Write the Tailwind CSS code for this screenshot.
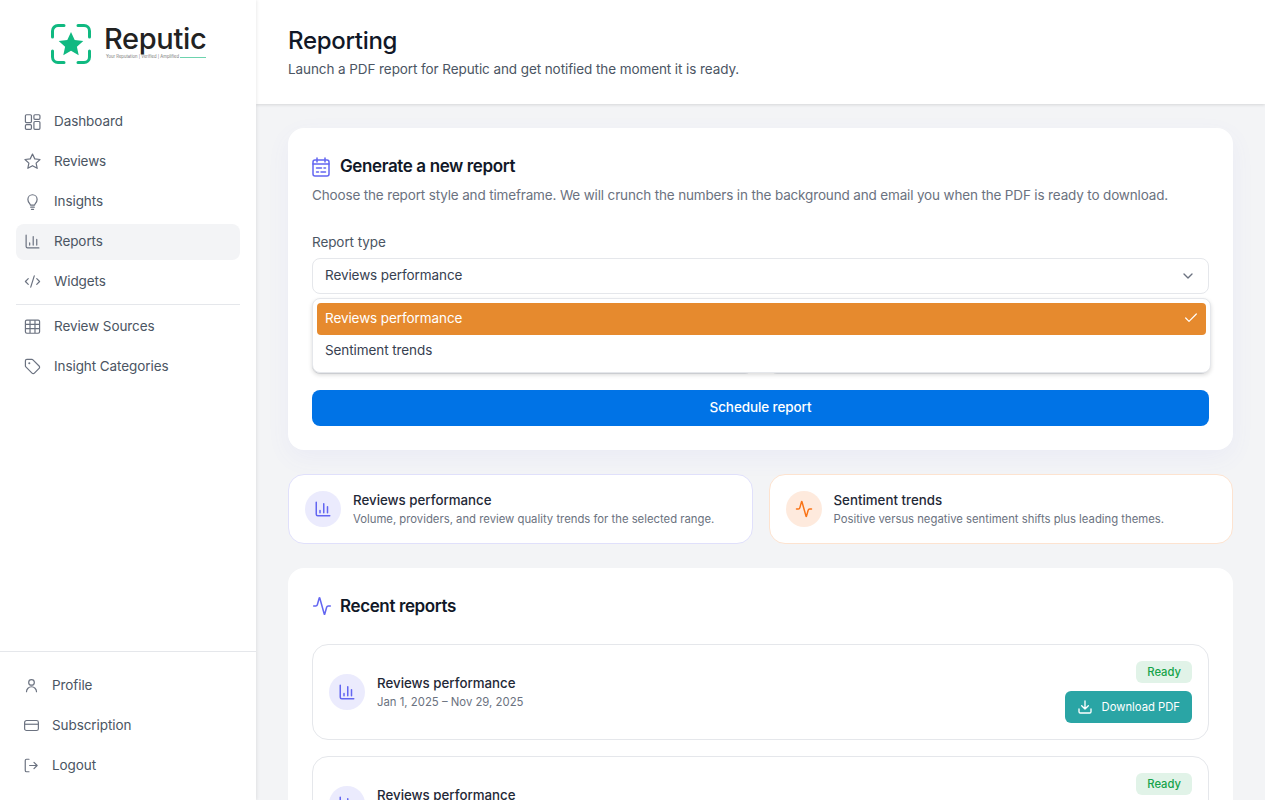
<!DOCTYPE html>
<html lang="en"><head><meta charset="utf-8"><title>Reporting</title>
<script src="https://cdn.jsdelivr.net/npm/@tailwindcss/browser@4"></script></head>
<body class="bg-white font-['Inter',sans-serif]">
<div class="flex h-screen overflow-hidden bg-white">
  <aside class="w-64 shrink-0 h-full flex flex-col bg-white relative z-10 shadow-[1px_0_3px_rgba(0,0,0,0.08)]">
    <div class="h-[104px] shrink-0 flex items-start pl-[51px] pt-[24px] gap-[13px]">
      <svg width="40" height="40" viewBox="0 0 40 40" fill="none" class="shrink-0"><path d="M1.5 13V7a5.5 5.5 0 0 1 5.5-5.5h6M27 1.500h6a5.500 5.500 0 0 1 5.500 5.500v6M38.500 27v6a5.500 5.500 0 0 1-5.500 5.500h-6M13 38.500H7A5.500 5.500 0 0 1 1.500 33v-6" stroke="#10b981" stroke-width="3" stroke-linecap="round"/><path d="M20 8l3.700 8 8.600.900-6.400 5.800 1.800 8.500L20 26.800l-7.700 4.400 1.800-8.500-6.400-5.800 8.600-.900z" fill="#10b981"/></svg>
      <div class="w-[102px]">
        <div class="text-[29px] leading-[30px] font-medium text-[#222] tracking-[-0.35px]">Reputic</div>
        <div class="flex items-center gap-[1px] pl-[2px]"><span class="text-[4.2px] leading-[6px] text-[#777] whitespace-nowrap">Your Reputation | Verified | Amplified</span><span class="h-px flex-1 bg-[#6dd3ae]"></span></div>
      </div>
    </div>
    <nav class="px-4 flex flex-col text-[13.5px] tracking-[-0.085px] text-[#4b5563]">
      <a class="h-9 mb-1 pb-[2px] flex items-center gap-[13px] px-2"><svg class="w-[17px] h-[17px] text-[#6b7280]" viewBox="0 0 24 24" fill="none" stroke="currentColor" stroke-width="1.700" stroke-linejoin="round"><rect x="2" y="2.500" width="8.500" height="11" rx="1.500"/><rect x="14" y="2.500" width="8.500" height="6.500" rx="1.500"/><rect x="14" y="12" width="8.500" height="11" rx="1.500"/><rect x="2" y="16.500" width="8.500" height="6.500" rx="1.500"/></svg>Dashboard</a>
      <a class="h-9 mb-1 pb-[2px] flex items-center gap-[13px] px-2"><svg class="w-[17px] h-[17px] text-[#6b7280]" viewBox="0 0 24 24" fill="none" stroke="currentColor" stroke-width="1.700" stroke-linejoin="round"><path d="M12 1.500l3.200 6.800 7.400.9-5.500 5.100 1.500 7.300-6.600-3.700-6.600 3.700 1.500-7.300L1.400 9.200l7.400-.9z"/></svg>Reviews</a>
      <a class="h-9 mb-1 pb-[2px] flex items-center gap-[13px] px-2"><svg class="w-[17px] h-[17px] text-[#6b7280]" viewBox="0 0 24 24" fill="none" stroke="currentColor" stroke-width="1.700" stroke-linecap="round" stroke-linejoin="round"><path d="M9 17c0-2-3.500-3.500-3.500-8a6.500 6.500 0 0 1 13 0c0 4.500-3.500 6-3.500 8z"/><path d="M9.500 20h5M10.500 23h3"/></svg>Insights</a>
      <a class="h-9 mb-1 pb-[2px] flex items-center gap-[13px] px-2 rounded-lg bg-[#f3f4f6]"><svg class="w-[17px] h-[17px] text-[#6b7280]" viewBox="0 0 24 24" fill="none" stroke="currentColor" stroke-width="1.700" stroke-linecap="round" stroke-linejoin="round"><path d="M3 3v16a2 2 0 0 0 2 2h16"/><path d="M18 17V9M13 17V5M8 17v-3"/></svg>Reports</a>
      <a class="h-9 pb-[2px] flex items-center gap-[13px] px-2"><svg class="w-[17px] h-[17px] text-[#6b7280]" viewBox="0 0 24 24" fill="none" stroke="currentColor" stroke-width="1.700" stroke-linecap="round" stroke-linejoin="round"><path d="m18 16 4-4-4-4M6 8l-4 4 4 4M14.500 4l-5 16"/></svg>Widgets</a>
      <div class="h-px bg-[#e5e7eb] mt-[4px] mb-[3px]"></div>
      <a class="h-9 mb-1 pb-[2px] flex items-center gap-[13px] px-2 mt-[1px]"><svg class="w-[17px] h-[17px] text-[#6b7280]" viewBox="0 0 24 24" fill="none" stroke="currentColor" stroke-width="1.700" stroke-linejoin="round"><rect x="2" y="3" width="20" height="18.500" rx="2"/><path d="M2 9h20M2 15h20M8.500 3v18M15.500 3v18"/></svg>Review Sources</a>
      <a class="h-9 pb-[2px] flex items-center gap-[13px] px-2"><svg class="w-[17px] h-[17px] text-[#6b7280]" viewBox="0 0 24 24" fill="none" stroke="currentColor" stroke-width="1.700" stroke-linecap="round" stroke-linejoin="round"><path d="M12.600 2.600a2 2 0 0 0-1.400-.6H4a2 2 0 0 0-2 2v7.200a2 2 0 0 0 .6 1.400l8.700 8.700a2.400 2.400 0 0 0 3.400 0l6.600-6.600a2.400 2.400 0 0 0 0-3.400z"/><circle cx="7.500" cy="7.500" r=".6" fill="currentColor"/></svg>Insight Categories</a>
    </nav>
    <div class="mt-auto border-t border-[#e5e7eb] px-4 pt-[15px] h-[149px] text-[13.5px] tracking-[-0.085px] text-[#4b5563] flex flex-col gap-1">
      <a class="h-9 flex items-center gap-[13px] px-2"><svg class="w-[15px] h-[15px] text-[#6b7280]" viewBox="0 0 24 24" fill="none" stroke="currentColor" stroke-width="1.900" stroke-linecap="round"><circle cx="12" cy="7" r="4.500"/><path d="M20 22a8 8 0 0 0-16 0"/></svg>Profile</a>
      <a class="h-9 flex items-center gap-[13px] px-2"><svg class="w-[15px] h-[15px] text-[#6b7280]" viewBox="0 0 24 24" fill="none" stroke="currentColor" stroke-width="1.900"><rect x="1" y="4" width="22" height="16" rx="3"/><path d="M1 10h22"/></svg>Subscription</a>
      <a class="h-9 flex items-center gap-[13px] px-2"><svg class="w-[15px] h-[15px] text-[#6b7280]" viewBox="0 0 24 24" fill="none" stroke="currentColor" stroke-width="1.900" stroke-linecap="round" stroke-linejoin="round"><path d="M8 22H4a2 2 0 0 1-2-2V4a2 2 0 0 1 2-2h4"/><path d="m16 17 5-5-5-5M21 12H9"/></svg>Logout</a>
    </div>
  </aside>
  <main class="flex-1 min-w-0 h-full overflow-hidden bg-[#f3f4f6]">
    <header class="h-[104px] bg-white px-8 pt-[25px] shadow-[0_1px_3px_rgba(0,0,0,0.12)]">
      <h1 class="text-[24px] leading-[32px] font-medium text-[#111827] tracking-[-0.3px]">Reporting</h1>
      <p class="text-[13.5px] tracking-[-0.085px] leading-[24px] text-[#4b5563]">Launch a PDF report for Reputic and get notified the moment it is ready.</p>
    </header>
    <div class="p-8 pt-6 flex flex-col gap-6">
      <section class="bg-white rounded-2xl p-6 h-[322px] shadow-[0_8px_24px_rgba(99,102,241,0.06)]">
        <div class="flex items-center gap-[10px] h-[28px]">
          <svg class="w-[18px] h-[20px] mt-[1px] text-[#6366f1]" viewBox="0 0 18 20" fill="none" stroke="currentColor" stroke-width="1.500" stroke-linecap="round"><rect x="1" y="3" width="16" height="16" rx="2"/><path d="M5 1v4M13 1v4M1 7h16"/><path d="M4.500 11h5M12 11h1.500M4.500 15h2M9 15h4.500"/></svg>
          <h2 class="text-[17px] tracking-[-0.38px] leading-[28px] font-semibold text-[#111827]">Generate a new report</h2>
        </div>
        <p class="mt-[3px] text-[13.5px] tracking-[-0.155px] leading-[24px] text-[#6b7280] whitespace-nowrap">Choose the report style and timeframe. We will crunch the numbers in the background and email you when the PDF is ready to download.</p>
        <div class="relative mt-[25px] flex flex-col gap-4">
          <div>
            <div class="text-[13.5px] tracking-[-0.085px] leading-[20px] text-[#4b5563] mb-[6px]">Report type</div>
            <div class="h-9 pb-[1px] rounded-lg border border-[#e5e7eb] bg-white flex items-center justify-between px-3 text-[13.5px] tracking-[-0.085px] text-[#374151]">Reviews performance<svg class="w-4 h-4 text-[#6b7280]" viewBox="0 0 24 24" fill="none" stroke="currentColor" stroke-width="2" stroke-linecap="round" stroke-linejoin="round"><path d="m6 9 6 6 6-6"/></svg></div>
          </div>
          <div class="grid grid-cols-2 gap-4 pt-7">
            <div class="h-9 rounded-lg border border-[#e5e7eb] bg-white"></div>
            <div class="h-9 rounded-lg border border-[#e5e7eb] bg-white"></div>
          </div>
          <button class="h-9 pb-[1px] rounded-lg bg-[#0073e6] text-white text-[13.5px] tracking-[-0.1px] font-medium">Schedule report</button>
          <div class="absolute left-0 -right-[2px] top-[66px] h-[75px] rounded-lg border border-[#e5e7eb] bg-white shadow-[0_2px_4px_rgba(0,0,0,0.15)] p-1 text-[13.5px] tracking-[-0.085px] text-[#374151]">
            <div class="h-8 pb-[2px] rounded bg-[#e68a2e] text-white flex items-center justify-between px-2">Reviews performance<svg class="w-4 h-4 mr-[-1px]" viewBox="0 0 24 24" fill="none" stroke="currentColor" stroke-width="1.800" stroke-linecap="round" stroke-linejoin="round"><path d="M20 6 9 17l-5-5"/></svg></div>
            <div class="h-8 pb-[2px] flex items-center px-2">Sentiment trends</div>
          </div>
        </div>
      </section>
      <div class="grid grid-cols-2 gap-4">
        <div class="h-[70px] rounded-2xl bg-white border border-[#e0e0fb] flex items-center gap-3 px-4">
          <div class="w-9 h-9 shrink-0 rounded-full bg-[#ebebfd] flex items-center justify-center"><svg class="w-[18px] h-[18px] text-[#6366f1]" viewBox="0 0 24 24" fill="none" stroke="currentColor" stroke-width="2" stroke-linecap="round" stroke-linejoin="round"><path d="M3 3v16a2 2 0 0 0 2 2h16"/><path d="M18 17V9M13 17V5M8 17v-3"/></svg></div>
          <div class="-mt-[1px]"><div class="text-[13.3px] leading-[18px] mb-[2px] font-medium text-[#1f2937]">Reviews performance</div><div class="text-[11.3px] leading-[16px] text-[#6b7280]">Volume, providers, and review quality trends for the selected range.</div></div>
        </div>
        <div class="h-[70px] rounded-2xl bg-white border border-[#fde3d0] flex items-center gap-3 px-4">
          <div class="w-9 h-9 shrink-0 rounded-full bg-[#feeadd] flex items-center justify-center"><svg class="w-[18px] h-[18px] text-[#f97316]" viewBox="0 0 24 24" fill="none" stroke="currentColor" stroke-width="2" stroke-linecap="round" stroke-linejoin="round"><path d="M22 12h-2.480a2 2 0 0 0-1.930 1.460l-2.350 8.360a.25.25 0 0 1-.48 0L9.240 2.180a.25.25 0 0 0-.48 0l-2.350 8.360A2 2 0 0 1 4.490 12H2"/></svg></div>
          <div class="-mt-[1px]"><div class="text-[13.3px] leading-[18px] mb-[2px] font-medium text-[#1f2937]">Sentiment trends</div><div class="text-[11.3px] leading-[16px] text-[#6b7280]">Positive versus negative sentiment shifts plus leading themes.</div></div>
        </div>
      </div>
      <section class="bg-white rounded-2xl p-6">
        <div class="flex items-center gap-[10px] h-[28px]">
          <svg class="w-5 h-5 text-[#6366f1]" viewBox="0 0 24 24" fill="none" stroke="currentColor" stroke-width="1.800" stroke-linecap="round" stroke-linejoin="round"><path d="M22 12h-2.480a2 2 0 0 0-1.930 1.460l-2.350 8.360a.25.25 0 0 1-.48 0L9.240 2.180a.25.25 0 0 0-.48 0l-2.350 8.360A2 2 0 0 1 4.490 12H2"/></svg>
          <h2 class="text-[17px] tracking-[-0.38px] leading-[28px] -ml-[2px] font-semibold text-[#111827]">Recent reports</h2>
        </div>
        <div class="mt-6 flex flex-col gap-4">
          <div class="h-[96px] rounded-2xl border border-[#e5e7eb] flex items-center justify-between pl-4 pr-4">
            <div class="flex items-center gap-3"><div class="w-9 h-9 rounded-full bg-[#ebebfd] flex items-center justify-center"><svg class="w-[18px] h-[18px] text-[#6366f1]" viewBox="0 0 24 24" fill="none" stroke="currentColor" stroke-width="2" stroke-linecap="round" stroke-linejoin="round"><path d="M3 3v16a2 2 0 0 0 2 2h16"/><path d="M18 17V9M13 17V5M8 17v-3"/></svg></div><div class="-mt-[1px]"><div class="text-[13.3px] leading-[18px] mb-[2px] font-medium text-[#1f2937]">Reviews performance</div><div class="text-[11.35px] leading-[16px] text-[#6b7280]">Jan 1, 2025 – Nov 29, 2025</div></div></div>
            <div class="flex flex-col items-end gap-2">
              <span class="h-[22px] px-[11px] rounded-md bg-[#e1f3e8] text-[#16a34a] text-[11.25px] font-medium flex items-center">Ready</span>
              <button class="h-8 px-3 rounded-md bg-[#2aa5a5] text-white text-[11.25px] flex items-center gap-[9px]"><svg class="w-[16px] h-[16px]" viewBox="0 0 24 24" fill="none" stroke="currentColor" stroke-width="2" stroke-linecap="round" stroke-linejoin="round"><path d="M21 15v4a2 2 0 0 1-2 2H5a2 2 0 0 1-2-2v-4"/><path d="m7 10 5 5 5-5M12 15V3"/></svg>Download PDF</button>
            </div>
          </div>
          <div class="h-[96px] rounded-2xl border border-[#e5e7eb] flex items-center justify-between pl-4 pr-4">
            <div class="flex items-center gap-3"><div class="w-9 h-9 rounded-full bg-[#ebebfd] flex items-center justify-center"><svg class="w-[18px] h-[18px] text-[#6366f1]" viewBox="0 0 24 24" fill="none" stroke="currentColor" stroke-width="2" stroke-linecap="round" stroke-linejoin="round"><path d="M3 3v16a2 2 0 0 0 2 2h16"/><path d="M18 17V9M13 17V5M8 17v-3"/></svg></div><div class="-mt-[1px]"><div class="text-[13.3px] leading-[18px] mb-[2px] font-medium text-[#1f2937]">Reviews performance</div><div class="text-[11.35px] leading-[16px] text-[#6b7280]">Jan 1, 2025 – Nov 29, 2025</div></div></div>
            <div class="flex flex-col items-end gap-2">
              <span class="h-[22px] px-[11px] rounded-md bg-[#e1f3e8] text-[#16a34a] text-[11.25px] font-medium flex items-center">Ready</span>
              <button class="h-8 px-3 rounded-md bg-[#2aa5a5] text-white text-[11.25px] flex items-center gap-[9px]"><svg class="w-[16px] h-[16px]" viewBox="0 0 24 24" fill="none" stroke="currentColor" stroke-width="2" stroke-linecap="round" stroke-linejoin="round"><path d="M21 15v4a2 2 0 0 1-2 2H5a2 2 0 0 1-2-2v-4"/><path d="m7 10 5 5 5-5M12 15V3"/></svg>Download PDF</button>
            </div>
          </div>
        </div>
      </section>
    </div>
  </main>
  <div class="w-[15px] shrink-0 bg-white"></div>
</div>
</body></html>
